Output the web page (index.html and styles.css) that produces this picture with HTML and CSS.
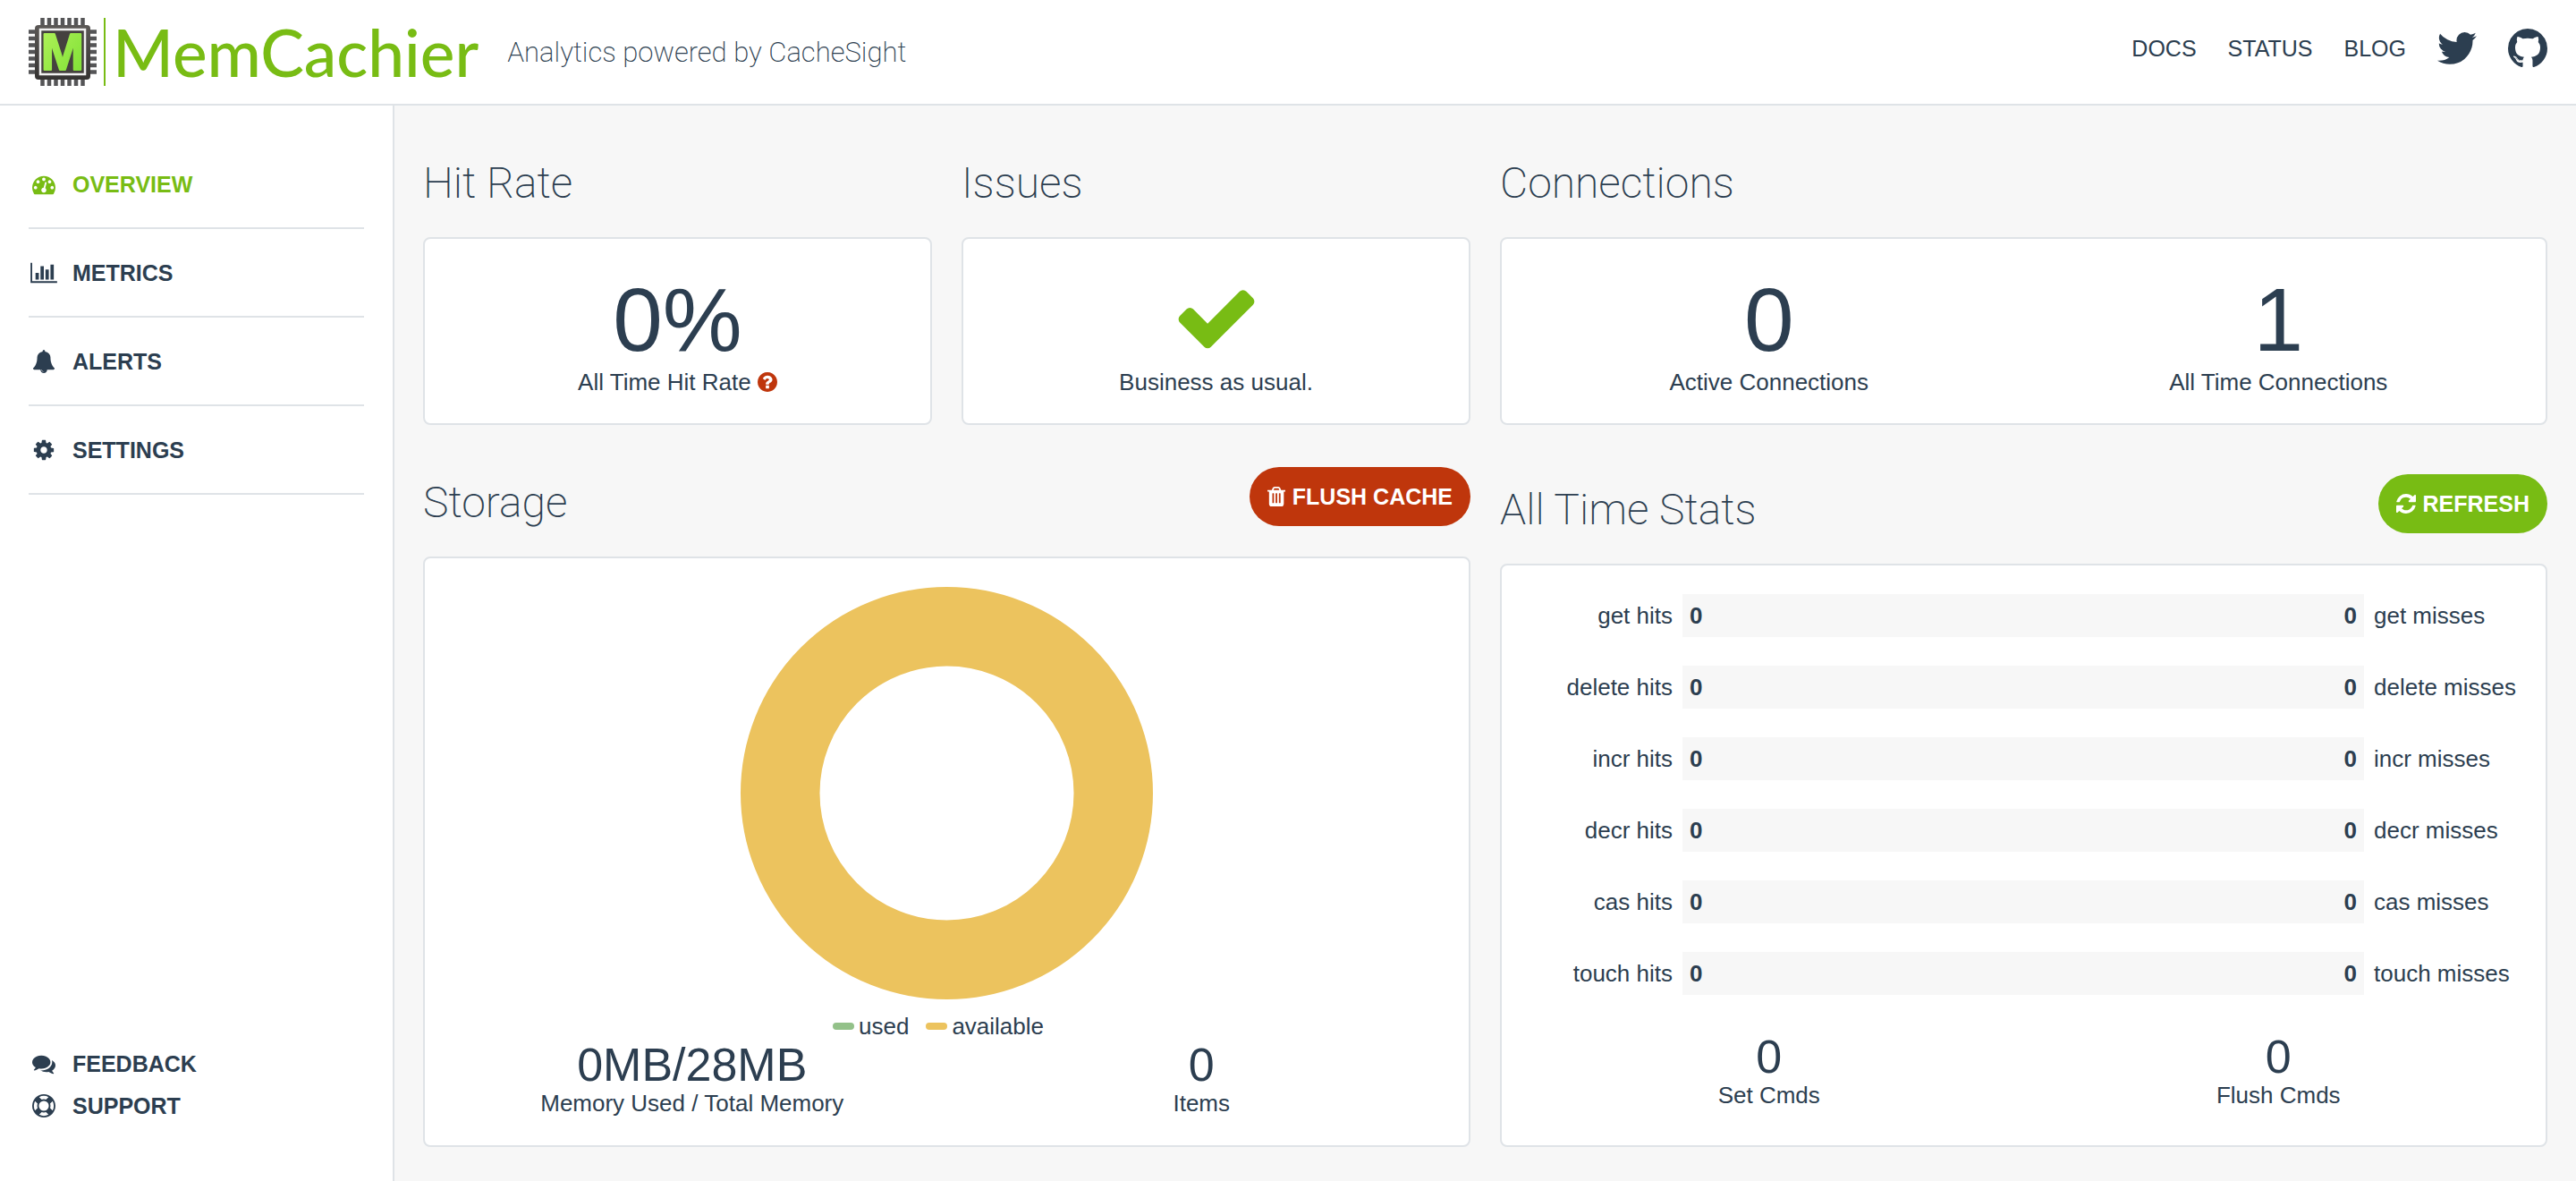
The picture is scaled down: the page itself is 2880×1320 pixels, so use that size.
FILE: index.html
```html
<!DOCTYPE html>
<html lang="en">
<head>
<meta charset="utf-8">
<meta name="viewport" content="width=device-width, initial-scale=1">
<title>MemCachier Analytics</title>
<link rel="stylesheet" href="styles.css">
</head>
<body>
<header class="topbar">
  <a class="brand" href="#">
    <svg class="brand-chip" viewBox="0 0 76 76" aria-hidden="true">
      <defs>
        <linearGradient id="chip" x1="0" y1="0" x2="0" y2="1"><stop offset="0" stop-color="#5b5856"/><stop offset="1" stop-color="#353332"/></linearGradient>
        <linearGradient id="leaf" x1="0" y1="0" x2="1" y2="1"><stop offset="0" stop-color="#b4f25c"/><stop offset="1" stop-color="#7be032"/></linearGradient>
      </defs>
      <g stroke="#555557" stroke-width="4.500">
        <path d="M15.500 0V76M23 0V76M30.500 0V76M38 0V76M45.500 0V76M53 0V76M60.500 0V76"/>
        <path d="M0 15.500H76M0 23H76M0 30.500H76M0 38H76M0 45.500H76M0 53H76M0 60.500H76"/>
      </g>
      <rect x="7" y="8" width="62" height="61" rx="4" fill="url(#chip)"/>
      <rect x="13" y="13" width="50" height="50" fill="#45413f" stroke="#f2f2f2" stroke-width="2.500"/>
      <text class="chip-letter" x="38" y="58" text-anchor="middle" fill="url(#leaf)" stroke="url(#leaf)">M</text>
    </svg>
    <span class="brand-name">MemCachier</span>
  </a>
  <p class="tagline">Analytics powered by CacheSight</p>
  <nav class="top-links" aria-label="Resources">
    <a href="#">DOCS</a>
    <a href="#">STATUS</a>
    <a href="#">BLOG</a>
    <a href="#" aria-label="Twitter"><svg class="social" viewBox="108 256 1576 1280"><path d="M1684 408q-67 98-162 167 1 14 1 42 0 130-38 259.500t-115.500 248.500-184.500 210.500-258 146-323 54.500q-271 0-496-145 35 4 78 4 225 0 401-138-105-2-188-64.500t-114-159.500q33 5 61 5 43 0 85-11-112-23-185.500-111.500t-73.500-205.500v-4q68 38 146 41-66-44-105-115t-39-154q0-88 44-163 121 149 294.500 238.500t371.500 99.500q-8-38-8-74 0-134 94.500-228.500t228.500-94.500q140 0 236 102 109-21 205-78-37 115-142 178 93-10 186-50z"/></svg></a>
    <a href="#" aria-label="GitHub"><svg class="social" viewBox="128 128 1536 1504"><path d="M896 128q209 0 385.500 103t279.500 279.500 103 385.500q0 251-146.500 451.500t-378.500 277.500q-27 5-40-7t-13-30q0-3 .5-76.500t.5-134.500q0-97-52-142 57-6 102.500-18t94-39 81-66.500 53-105 20.500-150.500q0-119-79-206 37-91-8-204-28-9-81 11t-92 44l-38 24q-93-26-192-26t-192 26q-16-11-42.500-27t-83.500-38.500-85-13.500q-45 113-8 204-79 87-79 206 0 85 20.500 150t52.500 105 80.500 67 94 39 102.500 18q-39 36-49 103-21 10-45 15t-57 5-65.500-21.500-55.500-62.500q-19-32-48.500-52t-49.500-24l-20-3q-21 0-29 4.500t-5 11.500 9 14 13 12l7 5q22 10 43.500 38t31.500 51l10 23q13 38 44 61.500t67 30 69.500 7 55.500-3.500l23-4q0 38 .5 88.500t.5 54.500q0 18-13 30t-40 7q-232-77-378.500-277.500t-146.500-451.500q0-209 103-385.500t279.500-279.500 385.500-103zm-477 1103q3-7-7-12-10-3-13 2-3 7 7 12 9 6 13-2zm31 34q7-5-2-16-10-9-16-3-7 5 2 16 10 10 16 3zm30 45q9-7 0-19-8-13-17-6-9 5 0 18t17 7zm42 42q8-8-4-19-12-12-20-3-9 8 4 19 12 12 20 3zm57 25q3-11-13-16-15-4-19 7t13 15q15 6 19-6zm63 5q0-13-17-11-16 0-16 11 0 13 17 11 16 0 16-11zm58-10q-2-11-18-9-16 3-14 15t18 8 14-14z"/></svg></a>
  </nav>
</header>

<div class="layout">
  <aside class="sidebar">
    <nav aria-label="Main">
      <ul class="menu">
        <li><a class="active" href="#" aria-current="page"><svg class="icon" viewBox="0 0 1792 1792"><path d="M384 1152q0-53-37.500-90.500t-90.500-37.500-90.500 37.500-37.500 90.500 37.500 90.500 90.500 37.500 90.500-37.500 37.500-90.500zm192-448q0-53-37.500-90.500t-90.500-37.500-90.500 37.500-37.500 90.500 37.500 90.500 90.500 37.500 90.500-37.500 37.500-90.500zm428 481l101-382q6-26-7.500-48.500t-38.500-29.500-48 6.500-30 39.500l-101 382q-60 5-107 43.500t-63 98.500q-20 77 20 146t117 89 146-20 89-117q16-60-6-117t-72-91zm660-33q0-53-37.500-90.500t-90.500-37.500-90.500 37.500-37.500 90.500 37.500 90.500 90.500 37.500 90.500-37.500 37.500-90.500zm-640-640q0-53-37.500-90.500t-90.500-37.500-90.500 37.500-37.500 90.500 37.500 90.500 90.500 37.500 90.500-37.500 37.500-90.500zm448 192q0-53-37.500-90.500t-90.500-37.500-90.500 37.500-37.500 90.500 37.500 90.500 90.500 37.500 90.500-37.500 37.500-90.500zm320 448q0 261-141 483-19 29-54 29h-1402q-35 0-54-29-141-221-141-483 0-182 71-348t191-286 286-191 348-71 348 71 286 191 191 286 71 348z"/></svg>OVERVIEW</a></li>
        <li><a href="#"><svg class="icon icon-wide" viewBox="0 0 2048 1792"><path d="M640 896v512h-256v-512h256zm384-512v1024h-256v-1024h256zm1024 1152v128h-2048v-1536h128v1408h1920zm-640-896v768h-256v-768h256zm384-384v1152h-256v-1152h256z"/></svg>METRICS</a></li>
        <li><a href="#"><svg class="icon" viewBox="0 0 1792 1792"><path d="M912 1696q0-16-16-16-59 0-101.500-42.500t-42.500-101.500q0-16-16-16t-16 16q0 73 51.500 124.500t124.500 51.500q16 0 16-16zm816-288q0 52-38 90t-90 38h-448q0 106-75 181t-181 75-181-75-75-181h-448q-52 0-90-38t-38-90q50-42 91-88t85-119.500 74.500-158.500 50-206 19.500-260q0-152 117-282.500t307-158.500q-8-19-8-39 0-40 28-68t68-28 68 28 28 68q0 20-8 39 190 28 307 158.500t117 282.500q0 139 19.500 260t50 206 74.500 158.500 85 119.500 91 88z"/></svg>ALERTS</a></li>
        <li><a href="#"><svg class="icon" viewBox="0 0 1792 1792"><path d="M1152 896q0-106-75-181t-181-75-181 75-75 181 75 181 181 75 181-75 75-181zm512-109v222q0 12-8 23t-20 13l-185 28q-19 54-39 91 35 50 107 138 10 12 10 25t-9 23q-27 37-99 108t-94 71q-12 0-26-9l-138-108q-44 23-91 38-16 136-29 186-7 28-36 28h-222q-14 0-24.500-8.500t-11.500-21.500l-28-184q-49-16-90-37l-141 107q-10 9-25 9-14 0-25-11-126-114-165-168-7-10-7-23 0-12 8-23 15-21 51-66.500t54-70.500q-27-50-41-99l-183-27q-13-2-21-12.500t-8-23.500v-222q0-12 8-23t19-13l186-28q14-46 39-92-40-57-107-138-10-12-10-24 0-10 9-23 26-36 98.500-107.500t94.500-71.500q13 0 26 10l138 107q44-23 91-38 16-136 29-186 7-28 36-28h222q14 0 24.500 8.500t11.500 21.500l28 184q49 16 90 37l142-107q9-9 24-9 13 0 25 10 129 119 165 170 7 8 7 22 0 12-8 23-15 21-51 66.500t-54 70.500q26 50 41 98l183 28q13 2 21 12.500t8 23.500z"/></svg>SETTINGS</a></li>
      </ul>
    </nav>
    <ul class="menu-help">
      <li><a href="#"><svg class="icon" viewBox="0 0 1792 1792"><path d="M1408 768q0 139-94 257t-256.500 186.500-353.500 68.500q-86 0-176-16-124 88-278 128-36 9-86 16h-3q-11 0-20.500-8t-11.500-21q-1-3-1-6.500t.5-6.500 2-6l2.500-5 3.500-5.500 4-5 4.500-5 4-4.500q5-6 23-25t26-29.500 22.500-29 25-38.500 20.500-44q-124-72-195-177t-71-224q0-139 94-257t256.500-186.500 353.500-68.500 353.500 68.500 256.500 186.500 94 257zm384 256q0 120-71 224.500t-195 176.500q10 24 20.500 44t25 38.500 22.500 29 26 29.500 23 25q1 1 4 4.500t4.500 5 4 5 3.500 5.500l2.500 5 2 6 .5 6.500-1 6.500q-3 14-13 22t-22 7q-50-7-86-16-154-40-278-128-90 16-176 16-271 0-472-132 58 4 88 4 161 0 309-45t264-129q125-92 192-212t67-254q0-77-23-152 129 71 204 178t75 230z"/></svg>FEEDBACK</a></li>
      <li><a href="#"><svg class="icon" viewBox="0 0 1792 1792"><path d="M896 0q182 0 348 71t286 191 191 286 71 348-71 348-191 286-286 191-348 71-348-71-286-191-191-286-71-348 71-348 191-286 286-191 348-71zm0 128q-190 0-361 90l194 194q82-28 167-28t167 28l194-194q-171-90-361-90zm-678 1129l194-194q-28-82-28-167t28-167l-194-194q-90 171-90 361t90 361zm678 407q190 0 361-90l-194-194q-82 28-167 28t-167-28l-194 194q171 90 361 90zm0-384q159 0 271.500-112.500t112.500-271.500-112.500-271.500-271.500-112.500-271.500 112.500-112.500 271.500 112.500 271.500 271.500 112.500zm484-217l194 194q90-171 90-361t-90-361l-194 194q28 82 28 167t-28 167z"/></svg>SUPPORT</a></li>
    </ul>
  </aside>

  <main class="dashboard">
    <section class="panel">
      <div class="panel-head"><h2>Hit Rate</h2></div>
      <div class="card summary">
        <div class="stat">
          <div class="stat-value">0%</div>
          <div class="stat-label">All Time Hit Rate <svg class="help" viewBox="128 128 1536 1536" role="img" aria-label="Help"><path d="M1024 1376v-192q0-14-9-23t-23-9h-192q-14 0-23 9t-9 23v192q0 14 9 23t23 9h192q14 0 23-9t9-23zm256-672q0-88-55.500-163t-138.500-116-170-41q-243 0-371 213-15 24 8 42l132 100q7 6 19 6 16 0 25-12 53-68 86-92 34-24 86-24 48 0 85.500 26t37.500 59q0 38-20 61t-68 45q-63 28-115.500 86.500t-52.500 125.500v36q0 14 9 23t23 9h192q14 0 23-9t9-23q0-19 21.500-49.500t54.500-49.500q32-18 49-28.500t46-35 44.500-48 28-60.500 12.500-81zm384 192q0 209-103 385.500t-279.500 279.500-385.500 103-385.500-103-279.500-279.500-103-385.500 103-385.500 279.500-279.500 385.500-103 385.500 103 279.500 279.500 103 385.500z"/></svg></div>
        </div>
      </div>
    </section>

    <section class="panel">
      <div class="panel-head"><h2>Issues</h2></div>
      <div class="card summary">
        <div class="stat">
          <div class="stat-value"><svg class="check" viewBox="0 0 1792 1792" aria-hidden="true"><path d="M1671 566q0 40-28 68l-724 724-136 136q-28 28-68 28t-68-28l-136-136-362-362q-28-28-28-68t28-68l136-136q28-28 68-28t68 28l294 295 656-657q28-28 68-28t68 28l136 136q28 28 28 68z"/></svg></div>
          <div class="stat-label">Business as usual.</div>
        </div>
      </div>
    </section>

    <section class="panel panel-wide">
      <div class="panel-head"><h2>Connections</h2></div>
      <div class="card summary">
        <div class="stat">
          <div class="stat-value">0</div>
          <div class="stat-label">Active Connections</div>
        </div>
        <div class="stat">
          <div class="stat-value">1</div>
          <div class="stat-label">All Time Connections</div>
        </div>
      </div>
    </section>

    <section class="panel panel-wide">
      <div class="panel-head">
        <h2>Storage</h2>
        <button class="btn btn-danger" type="button"><svg class="btn-icon" viewBox="192 128 1408 1536" aria-hidden="true"><path d="M704 1376v-704q0-14-9-23t-23-9h-64q-14 0-23 9t-9 23v704q0 14 9 23t23 9h64q14 0 23-9t9-23zm256 0v-704q0-14-9-23t-23-9h-64q-14 0-23 9t-9 23v704q0 14 9 23t23 9h64q14 0 23-9t9-23zm256 0v-704q0-14-9-23t-23-9h-64q-14 0-23 9t-9 23v704q0 14 9 23t23 9h64q14 0 23-9t9-23zm-544-992h448l-48-117q-7-9-17-11h-317q-10 2-17 11zm928 32v64q0 14-9 23t-23 9h-96v948q0 83-47 143.500t-113 60.500h-832q-66 0-113-58.500t-47-141.500v-952h-96q-14 0-23-9t-9-23v-64q0-14 9-23t23-9h309l70-167q15-37 54-63t79-26h320q40 0 79 26t54 63l70 167h309q14 0 23 9t9 23z"/></svg>FLUSH CACHE</button>
      </div>
      <div class="card storage">
        <svg class="donut" viewBox="0 0 461 461" role="img" aria-label="All storage available"><circle cx="230.500" cy="230.500" r="186.250" fill="none" stroke="#ecc35e" stroke-width="88.500"/></svg>
        <ul class="legend">
          <li><span class="swatch swatch-used"></span>used</li>
          <li><span class="swatch swatch-available"></span>available</li>
        </ul>
        <div class="stats-row">
          <div class="stat">
            <div class="stat-number">0MB/28MB</div>
            <div class="stat-label">Memory Used / Total Memory</div>
          </div>
          <div class="stat">
            <div class="stat-number">0</div>
            <div class="stat-label">Items</div>
          </div>
        </div>
      </div>
    </section>

    <section class="panel panel-wide">
      <div class="panel-head panel-head-tall">
        <h2>All Time Stats</h2>
        <button class="btn btn-primary" type="button"><svg class="btn-icon" viewBox="128 128 1536 1536" aria-hidden="true"><path d="M1639 1056q0 5-1 7-64 268-268 434.500t-478 166.500q-146 0-282.500-55t-243.500-157l-129 129q-19 19-45 19t-45-19-19-45v-448q0-26 19-45t45-19h448q26 0 45 19t19 45-19 45l-137 137q71 66 161 102t187 36q134 0 250-65t186-179q11-17 53-117 8-23 30-23h192q13 0 22.500 9.500t9.500 22.500zm25-800v448q0 26-19 45t-45 19h-448q-26 0-45-19t-19-45 19-45l138-138q-148-137-349-137-134 0-250 65t-186 179q-11 17-53 117-8 23-30 23h-199q-13 0-22.500-9.500t-9.500-22.500v-7q65-268 270-434.500t480-166.500q146 0 284 55.500t245 156.500l130-129q19-19 45-19t45 19 19 45z"/></svg>REFRESH</button>
      </div>
      <div class="card totals">
        <table class="ratios">
          <tbody>
            <tr><th scope="row">get hits</th><td><div class="bar"><b>0</b><b>0</b></div></td><td class="misses">get misses</td></tr>
            <tr><th scope="row">delete hits</th><td><div class="bar"><b>0</b><b>0</b></div></td><td class="misses">delete misses</td></tr>
            <tr><th scope="row">incr hits</th><td><div class="bar"><b>0</b><b>0</b></div></td><td class="misses">incr misses</td></tr>
            <tr><th scope="row">decr hits</th><td><div class="bar"><b>0</b><b>0</b></div></td><td class="misses">decr misses</td></tr>
            <tr><th scope="row">cas hits</th><td><div class="bar"><b>0</b><b>0</b></div></td><td class="misses">cas misses</td></tr>
            <tr><th scope="row">touch hits</th><td><div class="bar"><b>0</b><b>0</b></div></td><td class="misses">touch misses</td></tr>
          </tbody>
        </table>
        <div class="stats-row">
          <div class="stat">
            <div class="stat-number">0</div>
            <div class="stat-label">Set Cmds</div>
          </div>
          <div class="stat">
            <div class="stat-number">0</div>
            <div class="stat-label">Flush Cmds</div>
          </div>
        </div>
      </div>
    </section>
  </main>
</div>
</body>
</html>
```

FILE: styles.css
```css
:root {
  --ink: #2c3e50;
  --green: #78bc14;
  --red: #bf360c;
  --line: #dfe3e7;
  --page: #f7f7f7;
}

* {
  box-sizing: border-box;
}

body {
  margin: 0;
  min-height: 100vh;
  display: flex;
  flex-direction: column;
  background: var(--page);
  color: var(--ink);
  font: 26px/30px "Liberation Sans", Arial, sans-serif;
}

a {
  color: inherit;
  text-decoration: none;
}

ul {
  margin: 0;
  padding: 0;
  list-style: none;
}

svg {
  display: block;
  fill: currentColor;
}

/* Top bar */
.topbar {
  display: flex;
  align-items: center;
  height: 118px;
  padding: 0 32px;
  background: #fff;
  border-bottom: 2px solid var(--line);
}

.brand {
  display: flex;
  align-items: center;
  color: var(--green);
}

.brand-chip {
  width: 76px;
  height: 76px;
}

.chip-letter {
  font: 700 58px "Liberation Sans", Arial, sans-serif;
  stroke-width: 2px;
  stroke-linejoin: round;
}

.brand-name {
  margin-left: 8px;
  padding-left: 8px;
  border-left: 2px solid var(--green);
  font: 500 73px/76px Lato, sans-serif;
}

.tagline {
  margin: 0 0 0 32px;
  padding-top: 2px;
  font: 200 31px/40px Roboto, sans-serif;
}

.top-links {
  display: flex;
  align-items: center;
  gap: 35px;
  margin-left: auto;
  padding-bottom: 8px;
  font-size: 25px;
}

.social {
  width: 44px;
}

/* Sidebar */
.layout {
  flex: 1;
  display: flex;
}

.sidebar {
  flex: none;
  width: 441px;
  display: flex;
  flex-direction: column;
  justify-content: space-between;
  padding: 39px 32px 61px;
  background: #fff;
  border-right: 2px solid var(--line);
  font-size: 25px;
  font-weight: 700;
}

.menu a,
.menu-help a {
  display: flex;
  align-items: center;
  gap: 19px;
}

.menu a {
  height: 97px;
}

.menu li {
  border-bottom: 2px solid var(--line);
}

.menu-help a {
  height: 47px;
}

.active {
  color: var(--green);
}

.icon {
  width: 26px;
  height: 26px;
  margin-left: 4px;
}

.icon-wide {
  width: 30px;
  margin: 0 -2px 0 2px;
}

/* Dashboard */
.dashboard {
  flex: 1;
  min-width: 0;
  display: grid;
  grid-template-columns: repeat(4, minmax(0, 1fr));
  grid-template-rows: auto auto;
  align-content: start;
  column-gap: 33px;
  padding: 0 32px 38px;
}

.panel {
  display: flex;
  flex-direction: column;
}

.panel-wide {
  grid-column: span 2;
}

.panel-head {
  display: flex;
  align-items: flex-end;
  justify-content: space-between;
  height: 147px;
  padding-bottom: 34px;
}

.panel-head-tall {
  height: 155px;
}

h2 {
  margin: 0;
  font: 200 48px/52px Roboto, sans-serif;
}

.card {
  flex: 1;
  background: #fff;
  border: 2px solid var(--line);
  border-radius: 8px;
}

.btn {
  display: flex;
  align-items: center;
  gap: 8px;
  height: 66px;
  padding: 0 20px;
  border: 0;
  border-radius: 33px;
  color: #fff;
  font: 700 25px/30px "Liberation Sans", Arial, sans-serif;
}

.btn-danger {
  background: var(--red);
}

.btn-primary {
  background: var(--green);
}

.btn-icon {
  height: 22px;
}

/* Figures */
.summary {
  display: flex;
  padding: 35px 14px 31px;
}

.stats-row {
  display: flex;
}

.stat {
  flex: 1;
  text-align: center;
}

.stat-value {
  height: 110px;
  font-size: 100px;
  line-height: 110px;
}

.stat-number {
  font-size: 52px;
  line-height: 56px;
}

.help {
  display: inline-block;
  width: 22px;
  height: 22px;
  vertical-align: -2px;
  color: var(--red);
}

.check {
  width: 98px;
  height: 102px;
  margin: 0 auto;
  padding-top: 4px;
  color: var(--green);
}

/* Storage */
.storage {
  padding: 32px 14px;
}

.donut {
  width: 461px;
  height: 461px;
  margin: 0 auto;
}

.legend {
  display: flex;
  justify-content: center;
  margin-top: 15px;
}

.legend li {
  display: flex;
  align-items: center;
  gap: 5px;
  margin-right: 19px;
}

.swatch {
  width: 24px;
  height: 8px;
  border-radius: 4px;
}

.swatch-used {
  background: #93c189;
}

.swatch-available {
  background: #ecc35e;
}

/* All time stats */
.totals {
  padding: 16px 14px 40px;
}

.ratios {
  width: 100%;
  margin-bottom: 25px;
  border-spacing: 0;
  table-layout: fixed;
}

.ratios th,
.ratios td {
  height: 80px;
  padding: 0;
}

.ratios th {
  width: 188px;
  padding-right: 11px;
  font-weight: 400;
  text-align: right;
}

.ratios .misses {
  width: 189px;
  padding-left: 11px;
}

.bar {
  display: flex;
  align-items: center;
  justify-content: space-between;
  height: 48px;
  padding: 0 8px;
  background: var(--page);
}
```
